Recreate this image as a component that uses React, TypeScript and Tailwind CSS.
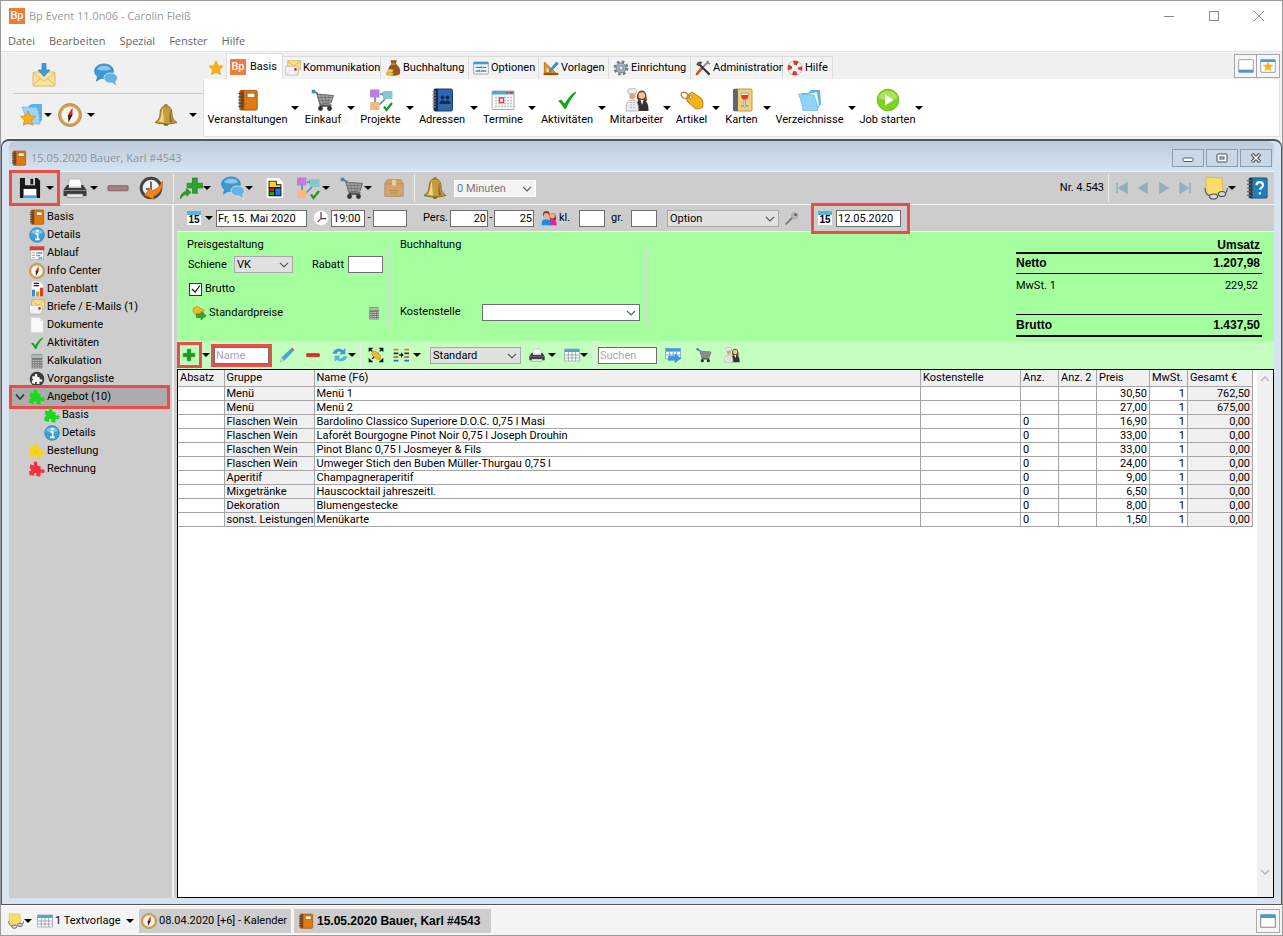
import type { ReactNode } from "react";

type P = { c?: string };

const Svg = ({ c = "size-6", children, box = "0 0 24 24" }: { c?: string; children: ReactNode; box?: string }) => (
  <svg viewBox={box} className={`${c} shrink-0`} aria-hidden="true">
    {children}
  </svg>
);

/* ---------- icons ---------- */
const Logo = ({ c = "size-4" }: P) => (
  <span className={`${c} flex shrink-0 items-center justify-center bg-[#ee7c3a] font-[Roboto] text-[11px] leading-none font-medium text-white`}>
    Bp
  </span>
);
const Notebook = ({ c }: P) => (
  <Svg c={c}>
    <rect x="3" y="1.500" width="19" height="21.500" rx="1.500" fill="#e07a10" stroke="#a8500a" />
    <rect x="4" y="2" width="4" height="20.500" fill="#8a4a18" />
    <path d="M1.500 5h5M1.500 8.500h5M1.500 12h5M1.500 15.500h5M1.500 19h5" stroke="#444" strokeWidth="1.300" />
    <rect x="11" y="4.500" width="8.500" height="5" fill="#fff" stroke="#9a4a0a" strokeWidth=".8" />
  </Svg>
);
const Cart = ({ c }: P) => (
  <Svg c={c}>
    <path d="M2 3.500l4 1.500 3.500 12h11" fill="none" stroke="#666" strokeWidth="1.600" />
    <path d="M6 6l16.500 1.500-2.500 7.500-11 1z" fill="#a2a2a2" stroke="#6a6a6a" />
    <path d="M10 7l2 8M14 7l1 8M18 7.500l-1 7.500M7 9.500h15M8 12.500h13" stroke="#6e6e6e" strokeWidth=".8" fill="none" />
    <path d="M8.500 18h11" stroke="#444" strokeWidth="1.500" />
    <circle cx="9.500" cy="20.500" r="2.400" fill="#333" />
    <circle cx="18.500" cy="20.500" r="2.400" fill="#333" />
    <circle cx="2.500" cy="3.500" r="2" fill="#2f8fc0" />
  </Svg>
);
const Projects = ({ c }: P) => (
  <Svg c={c}>
    <path d="M6 9v6M11 6h4M10 17l6-6" stroke="#3b8fd0" strokeWidth="1.600" fill="none" />
    <path d="M3.500 14h5L6 17zM13.500 3.500v5L16 6z" fill="#3b8fd0" />
    <rect x="1" y="1.500" width="9.500" height="8" rx="1" fill="#c07be0" />
    <rect x="14" y="3" width="9.500" height="8" rx="1" fill="#86c6cc" />
    <rect x="1" y="14" width="9.500" height="8" rx="1" fill="#fbb783" />
    <path d="M15 18.500l2.500 3.500L23 15" fill="none" stroke="#159a1f" strokeWidth="2.200" />
  </Svg>
);
const AddressBook = ({ c }: P) => (
  <Svg c={c}>
    <rect x="4" y="1" width="18.500" height="22" rx="1.500" fill="#2f66b0" stroke="#1c3c6c" />
    <rect x="4" y="1" width="4" height="22" fill="#1b2c48" />
    <path d="M2 4h4M2 7h4M2 10h4M2 13h4M2 16h4M2 19h4" stroke="#999" />
    <circle cx="12.500" cy="9.500" r="2" fill="#152c55" />
    <circle cx="17.500" cy="9.500" r="2" fill="#152c55" />
    <path d="M9.500 16c0-5 6-5 6 0zM14.500 16c0-5 6-5 6 0z" fill="#152c55" />
  </Svg>
);
const Calendar = ({ c }: P) => (
  <Svg c={c}>
    <rect x="1" y="3" width="22" height="18.500" rx="1" fill="#f8f8f8" stroke="#aaa" />
    <path d="M1 3h22v3.500H1z" fill="#4ba9dc" />
    <path d="M15 4h2v1.500h-2zM18.500 4h3v1.500h-3z" fill="#d33" />
    <path d="M4 9.500h17M4 12.500h17M4 15.500h17M4 18.500h17" stroke="#c4c4c4" strokeWidth="1.400" strokeDasharray="2 1" />
    <rect x="8.500" y="10" width="4" height="4.500" fill="#fff" stroke="#d33" strokeWidth="1.300" />
  </Svg>
);
const Check = ({ c }: P) => (
  <Svg c={c}>
    <path d="M3 13l3-1.500 3.500 4C13 10 16 6.500 20.500 3.500L21 5c-4 4.500-7.500 9.500-10 16H9.500C7.500 17.500 5.500 15 3 13z" fill="#12a81c" />
  </Svg>
);
const Staff = ({ c }: P) => (
  <Svg c={c}>
    <path d="M12 10c-1-9 9-10 9.500-2l.5 5h-9z" fill="#7b4520" />
    <circle cx="16.800" cy="7.500" r="3.300" fill="#f2c29a" />
    <path d="M11 23c0-8 1-11 6-11s6.500 4 6.500 11z" fill="#333" />
    <path d="M15.500 12l1.500 5 1.500-5z" fill="#fff" />
    <path d="M3.500 6C1 1 5 0 7 1c2-1.500 6 0 4 5z" fill="#eee" stroke="#999" strokeWidth=".7" />
    <circle cx="7.300" cy="8.300" r="3" fill="#dca57c" />
    <path d="M1 23c0-7 1-11 6.200-11s6.300 4 6.300 11z" fill="#ececec" stroke="#999" strokeWidth=".7" />
    <path d="M6 14v7M9 14v7" stroke="#888" strokeDasharray="1 1.500" />
  </Svg>
);
const Tag = ({ c }: P) => (
  <Svg c={c}>
    <path d="M7 8l5-4 9.500 6.500c1.500 2 1.700 5 1.200 8.500-2.500 2-5.500 2.500-8.200 1L7 13z" fill="#f5b21a" stroke="#c07c08" />
    <circle cx="10.500" cy="9" r="1.500" fill="#fff" stroke="#a87010" strokeWidth=".7" />
    <path d="M10 9C5 2 0 4 1.500 8c1.500 3 5 3 8 1" fill="none" stroke="#b08a40" strokeWidth="1.500" />
  </Svg>
);
const MenuCard = ({ c }: P) => (
  <Svg c={c}>
    <rect x="4" y="1" width="18" height="22" rx="1" fill="#f2d077" stroke="#b59a50" />
    <rect x="3" y="1" width="5" height="22" rx="1" fill="#5f6670" />
    <path d="M11 5h7.500c0 5-1 6.500-3 7v5.500h2.500v1.200h-6.500v-1.200h2.500V12c-2-.5-3-2-3-7z" fill="#e6eef2" stroke="#889" strokeWidth=".7" />
    <path d="M11.300 7h6.900c-.2 3-1 4.500-3.400 4.800-2.400-.3-3.300-1.800-3.500-4.800z" fill="#e03c2c" />
  </Svg>
);
const Folder = ({ c }: P) => (
  <Svg c={c}>
    <path d="M3 5h7l3-3h9l1 14-4 6z" fill="#5fb2e4" />
    <path d="M5 7l14-3 2 13-2 3z" fill="#e8f5fd" />
    <path d="M.5 6l15.500 1c2 5 3 9 4 15.500H5C4 16 3 12 .5 6z" fill="#8fd4f8" stroke="#68b5e4" strokeWidth=".7" />
  </Svg>
);
const Play = ({ c }: P) => (
  <Svg c={c}>
    <circle cx="12" cy="12" r="10.800" fill="#7ed321" stroke="#66b414" strokeWidth=".8" />
    <path d="M2.500 10a10 10 0 0119 0c-5 3-13 3-19 0z" fill="#a8e45e" />
    <path d="M9 6.500v11l8.500-5.500z" fill="#fff" />
  </Svg>
);
const Star = ({ c }: P) => (
  <Svg c={c}>
    <path d="M12 1.500l3.200 7 7.500.8-5.600 5.200 1.600 7.600L12 18.200l-6.700 3.900 1.600-7.600L1.300 9.300l7.500-.8z" fill="#fbb116" stroke="#d88c0a" strokeWidth=".9" />
  </Svg>
);
const Mail = ({ c }: P) => (
  <Svg c={c}>
    <rect x="4" y="1" width="19.500" height="14" rx="1" fill="#fbe08e" stroke="#c9a448" />
    <path d="M4 2l9.500 7L23 2" fill="none" stroke="#c9a448" />
    <rect x=".7" y="9.500" width="19" height="13" rx="1" fill="#f6f6f6" stroke="#aaa" />
    <path d="M1 22l8-8M19 22l-6-7" stroke="#ccc" />
    <rect x="14" y="12" width="3.500" height="4" fill="#dd2c1c" />
  </Svg>
);
const MoneyBag = ({ c }: P) => (
  <Svg c={c}>
    <path d="M9 1h8l-1.500 5c5 3 8 9 6 15-4 2.500-13 2.500-15.500 0C4.500 15 6.500 9 10.500 6z" fill="#96581e" stroke="#6a3a0e" />
    <path d="M9.500 6h6" stroke="#e5b45a" strokeWidth="1.500" />
    <ellipse cx="7" cy="20.500" rx="5.500" ry="2.500" fill="#f4c64c" stroke="#b98a18" strokeWidth=".8" />
    <ellipse cx="8" cy="16" rx="4.500" ry="2.200" fill="#f8d76a" stroke="#b98a18" strokeWidth=".8" />
  </Svg>
);
const Options = ({ c }: P) => (
  <Svg c={c}>
    <rect x="1" y="3" width="22" height="18" rx="1" fill="#f4f8f8" stroke="#7a8a90" />
    <path d="M1 3h22v3.500H1z" fill="#3f9dcc" />
    <path d="M4 11h8M15 11h5M4 16.500h5M12 16.500h8" stroke="#67828a" strokeWidth="2" />
    <path d="M12 9.500l2 3M9 15l2 3" stroke="#2c8cba" strokeWidth="1.800" />
  </Svg>
);
const Templates = ({ c }: P) => (
  <Svg c={c}>
    <path d="M2 3v18h19z" fill="#e8922c" stroke="#a85a0c" />
    <path d="M5.500 12v6h6z" fill="#efefef" />
    <path d="M1 21h22" stroke="#9a5510" strokeWidth="3.500" />
    <path d="M10 15L20 3l3 2.500-10.500 11L9 18z" fill="#3b9bd8" stroke="#1f6898" strokeWidth=".8" />
  </Svg>
);
const Gear = ({ c }: P) => (
  <Svg c={c}>
    <circle cx="12" cy="12" r="9.500" fill="none" stroke="#6b7c8e" strokeWidth="3.500" strokeDasharray="4 3.460" />
    <circle cx="12" cy="12" r="7.500" fill="#a7b4c2" stroke="#6b7c8e" strokeWidth="1.500" />
    <circle cx="12" cy="12" r="3.200" fill="#f0f0f0" stroke="#5a6a7a" strokeWidth="1.200" />
  </Svg>
);
const Tools = ({ c }: P) => (
  <Svg c={c}>
    <path d="M20 3L7 15" stroke="#8c8c8c" strokeWidth="2.600" />
    <path d="M10 12.500L3 21" stroke="#e0502a" strokeWidth="4" strokeLinecap="round" />
    <path d="M7 7l14 14" stroke="#333" strokeWidth="3.200" strokeLinecap="round" />
    <path d="M2 7c1-4 5-6 9-4L7.500 8.500 5 9.500z" fill="#555" />
    <path d="M17 1l1 4 4 2 1.500-3-2.500 1-1.500-1.500L21 1z" fill="#888" />
  </Svg>
);
const Lifebuoy = ({ c }: P) => (
  <Svg c={c}>
    <circle cx="12" cy="12" r="7.800" fill="none" stroke="#f6f6f6" strokeWidth="6" />
    <circle cx="12" cy="12" r="7.800" fill="none" stroke="#e2382c" strokeWidth="6" strokeDasharray="6.500 5.750" strokeDashoffset="3.200" />
    <circle cx="12" cy="12" r="10.800" fill="none" stroke="#a66" strokeWidth=".6" />
  </Svg>
);
const MailIn = ({ c }: P) => (
  <Svg c={c}>
    <rect x="1" y="9" width="22" height="14" rx="1" fill="#fbe3a0" stroke="#dbb968" />
    <path d="M1 10l11 8 11-8M1 22l8-7M23 22l-8-7" fill="none" stroke="#dbb968" />
    <path d="M10 .5h4V7h4l-6 6.500L6 7h4z" fill="#3c9ed8" stroke="#2b82b8" strokeWidth=".7" />
  </Svg>
);
const Chat = ({ c }: P) => (
  <Svg c={c}>
    <path d="M10 1c5.500 0 9.300 3 9.300 7s-4 7.500-9.300 7.500c-1 0-2 0-3-.3L2.500 18l1-4.500C1.700 12 .7 10.500.7 8c0-4 3.800-7 9.300-7z" fill="#3f97d2" stroke="#2f80bc" strokeWidth=".8" />
    <path d="M3 6c2-4.500 12-4.500 14 0-3 2-10 2-14 0z" fill="#8cc8ee" />
    <path d="M16.500 10c4 0 6.800 2 6.800 5 0 1.500-.6 2.700-1.700 3.600l1.200 5-4.300-3.600c-5 .6-8.500-1.800-8.500-5s2.500-5 6.500-5z" fill="#62b3e8" stroke="#e6f2fa" strokeWidth=".7" />
  </Svg>
);
const FolderStar = ({ c }: P) => (
  <Svg c={c}>
    <path d="M9 3l4-2h10v16l-3 4z" fill="#5fb2e4" />
    <path d="M3 4l15 .5c2 5 2.500 10 3 16.500H7C6 14 6 10 3 4z" fill="#9ad6f6" stroke="#68b5e4" strokeWidth=".7" />
    <path d="M9 8l2.200 4.800 5.300.6-4 3.600 1.200 5.300L9 19.600 4.300 22.300 5.500 17l-4-3.600 5.300-.6z" fill="#fbb116" stroke="#d88c0a" strokeWidth=".8" />
  </Svg>
);
const Compass = ({ c }: P) => (
  <Svg c={c}>
    <circle cx="12" cy="12" r="10" fill="#f8f6ee" stroke="#d2a450" strokeWidth="2.800" />
    <circle cx="12" cy="12" r="11.500" fill="none" stroke="#9a6c1c" strokeWidth=".6" />
    <path d="M14.500 4.500v7.500H10z" fill="#dd2222" />
    <path d="M10 12h4.500L10.500 19.500z" fill="#222" />
  </Svg>
);
const Bell = ({ c }: P) => (
  <Svg c={c}>
    <circle cx="12" cy="20.500" r="2.500" fill="#8a6420" />
    <circle cx="12" cy="2.500" r="1.800" fill="#b08a3a" />
    <path d="M12 3c5 0 5.800 4 6 8 .2 4 1.500 6 5 8.500-6 2-16 2-22 0C4.500 17 5.800 15 6 11c.2-4 1-8 6-8z" fill="#c79c3c" stroke="#7c5c1c" strokeWidth=".8" />
    <path d="M9 5c-2 3-1 9-4 13.500 2 .7 3 .8 5 1C10 15 8.500 9 9 5z" fill="#f0d58a" />
    <path d="M16 6c1 4 0 9 3 13l-3 .7c-1-4-.5-9 0-13.700z" fill="#8f6a22" />
  </Svg>
);
const Save = ({ c }: P) => (
  <Svg c={c}>
    <path d="M1 1h19l3 3v19H1z" fill="#181818" />
    <rect x="5" y="13" width="14" height="10" fill="#fff" />
    <rect x="5" y="20" width="14" height="3" fill="#3fa9dc" />
    <rect x="6.500" y="1" width="11" height="8" fill="#d0d0d0" />
    <rect x="12.500" y="2" width="3" height="6" fill="#181818" />
  </Svg>
);
const Printer = ({ c }: P) => (
  <Svg c={c}>
    <path d="M6.500 3h11l1.500 8H5z" fill="#fafafa" stroke="#aaa" strokeWidth=".7" />
    <path d="M4 9h2l-.5 3h13L18 9h2l3.500 5v6H.5v-6z" fill="#3a3a3a" />
    <path d="M1 14.500h22" stroke="#888" />
    <rect x="4" y="18" width="16" height="3.500" fill="#e6e6e6" stroke="#777" strokeWidth=".6" />
  </Svg>
);
const Minus = ({ c, fill = "#a08080", line = "#7c5f5f" }: P & { fill?: string; line?: string }) => (
  <Svg c={c}>
    <rect x="1" y="9.500" width="22" height="5.500" rx="1" fill={fill} stroke={line} />
  </Svg>
);
const ClockArrow = ({ c }: P) => (
  <Svg c={c}>
    <circle cx="12" cy="12" r="9.800" fill="#f4f4f4" stroke="#444" strokeWidth="3" />
    <path d="M12 5.500V13H7" fill="none" stroke="#444" strokeWidth="1.500" />
    <path d="M23.500 5c.5 8-3 13-9 15.500l.5 3L5.500 19l6-7.500.7 3.500C17 13.500 21 10.500 23.500 5z" fill="#f2831c" stroke="#c85c08" strokeWidth=".6" />
  </Svg>
);
const PlusArrow = ({ c }: P) => (
  <Svg c={c}>
    <path d="M13 1h5v5.500h5.500v5H18V17h-5v-5.500H7.500v-5H13z" fill="#2aa52a" stroke="#148014" strokeWidth=".7" />
    <path d="M.5 23c0-5 2.500-7.500 6-8V12l5 4-4.500 4v-2.300c-2.500.3-4.500 2-6.500 5.300z" fill="#22a422" stroke="#128012" strokeWidth=".6" />
  </Svg>
);
const ColorDoc = ({ c }: P) => (
  <Svg c={c}>
    <path d="M3 1h13l5 5v17H3z" fill="#fff" />
    <path d="M5 4h9v4h5v13H5z" fill="#111" />
    <path d="M6 5h7v6H6zM13 9h5v2h-5z" fill="#ffd800" />
    <rect x="6" y="12.500" width="5" height="3" fill="#e02020" />
    <rect x="6" y="16.500" width="5" height="3.500" fill="#22a822" />
    <rect x="12.500" y="12.500" width="5.500" height="7.500" fill="#1478e8" />
  </Svg>
);
const Box = ({ c }: P) => (
  <Svg c={c}>
    <path d="M4 2h16l3 5v15H1V7z" fill="#d2a36c" stroke="#b88a54" />
    <path d="M1 7h22" stroke="#b88a54" />
    <path d="M10 2h4l.5 7h-5z" fill="#ecd0a4" />
    <path d="M6 15h12M8 18h8" stroke="#b88a54" strokeWidth="1.400" />
  </Svg>
);
const Sticky = ({ c }: P) => (
  <Svg c={c}>
    <path d="M2 1l16 1 1 14-13 3-4-2z" fill="#f8dc6c" stroke="#d6b440" strokeWidth=".8" />
    <path d="M1 12c0 4 2 7 5 8M23.500 12c-.5 4-2 6-4 6" fill="none" stroke="#666" strokeWidth="1.300" />
    <ellipse cx="9.500" cy="20.500" rx="4" ry="2.500" fill="#d8d8d8" stroke="#555" strokeWidth="1.200" />
    <ellipse cx="18" cy="18" rx="3.600" ry="2.500" fill="#d8d8d8" stroke="#555" strokeWidth="1.200" />
  </Svg>
);
const HelpBook = ({ c }: P) => (
  <Svg c={c}>
    <rect x="4" y="1" width="19" height="22" rx="1" fill="#1f7fb8" stroke="#14567e" />
    <rect x="3" y="1" width="4" height="22" fill="#3a3a3a" />
    <path d="M1 4h4M1 8h4M1 12h4M1 16h4M1 20h4" stroke="#666" strokeWidth="1.300" />
    <path d="M11.500 9c0-4.500 7-4.500 7 0 0 2.500-3.200 2.500-3.200 5M15.200 16.500v2.500" fill="none" stroke="#fff" strokeWidth="2.400" />
  </Svg>
);
const Day15 = ({ c = "size-3.5" }: P) => (
  <span className={`${c} flex shrink-0 flex-col bg-white`}>
    <span className="h-1 w-full bg-[#57b3dd]" />
    <span className="flex flex-1 items-center justify-center font-[Liberation_Sans] text-[10px] leading-none font-bold">15</span>
  </span>
);
const Clock = ({ c }: P) => (
  <Svg c={c}>
    <circle cx="12" cy="12" r="11" fill="#fff" stroke="#ddd" />
    <path d="M12 3v10h8" fill="none" stroke="#444" strokeWidth="1.800" />
    <path d="M12 13l-5 5" stroke="#d22" strokeWidth="1.800" />
  </Svg>
);
const People = ({ c }: P) => (
  <Svg c={c}>
    <path d="M13 12c-1-9 8-10 9-3l1 6h-9z" fill="#8c3a24" />
    <circle cx="17" cy="8.500" r="3.800" fill="#f0b08c" />
    <path d="M11 23c0-8 2-9 6-9s6.500 2 6.500 9z" fill="#f01c9c" />
    <circle cx="8" cy="6.500" r="5" fill="#7a3c24" />
    <circle cx="8" cy="8.500" r="4" fill="#eab08c" />
    <path d="M1 23c0-8 2-9 7-9s7 2 7 9z" fill="#1c8cdc" />
  </Svg>
);
const Wrench = ({ c }: P) => (
  <Svg c={c}>
    <path d="M2 22L14 10" stroke="#777" strokeWidth="3" strokeLinecap="round" />
    <circle cx="16.500" cy="8" r="5.500" fill="#b8b8b8" stroke="#999" />
    <circle cx="18" cy="6.500" r="2.200" fill="#555" />
  </Svg>
);
const Info = ({ c }: P) => (
  <Svg c={c}>
    <circle cx="12" cy="12" r="11" fill="#3d9fd6" stroke="#2578a8" />
    <path d="M3 9a10 10 0 0118 0c-6 2-12 2-18 0z" fill="#86c6ea" />
    <circle cx="12.500" cy="6" r="1.800" fill="#fff" />
    <path d="M9.500 10.500H13V18M9 18.500h7" stroke="#fff" strokeWidth="2.400" fill="none" />
  </Svg>
);
const Schedule = ({ c }: P) => (
  <Svg c={c}>
    <rect x="2" y="3" width="20" height="19" fill="#fbfbfb" stroke="#aaa" />
    <path d="M1 2h22v6H1z" fill="#d8403c" />
    <path d="M4 12h5M4 15.500h5M4 19h5" stroke="#aaa" strokeWidth="1.500" />
    <path d="M11 12h9M11 16h6M14 19.500h6" stroke="#3f9dd8" strokeWidth="2" />
  </Svg>
);
const DataSheet = ({ c }: P) => (
  <Svg c={c}>
    <path d="M4 1h12l5 5v17H4z" fill="#fcfcfc" />
    <path d="M7 3.500h8M7 7h8" stroke="#222" strokeWidth="2" />
    <rect x="4.500" y="13" width="4.500" height="10" fill="#2f8fd8" />
    <rect x="10.500" y="16" width="4.500" height="7" fill="#f08c1c" />
    <rect x="16.500" y="10" width="4.500" height="13" fill="#dc3c2c" />
  </Svg>
);
const Page = ({ c }: P) => (
  <Svg c={c}>
    <path d="M3 1h13l5 5v17H3z" fill="#fafafa" stroke="#ddd" />
    <path d="M16 1v5h5z" fill="#ddd" />
  </Svg>
);
const Calculator = ({ c }: P) => (
  <Svg c={c}>
    <rect x="4" y="2" width="16" height="21" fill="#777" />
    <rect x="4" y="3" width="16" height="4.500" fill="#9fc49f" />
    <path d="M5.500 11h13M5.500 14.500h13M5.500 18h13M5.500 21h13" stroke="#f4f4f4" strokeWidth="1.200" strokeDasharray="2.500 1.300" />
  </Svg>
);
const puzzle =
  "M.5 15c3 .8 4-3 .5-4.300L2 5l5 1.200C9 6 5.500 3.500 7.500 1.500c2.200-1.800 6 0 4.800 2.700-.8 2 .2 2.800 2 3.200l3 .6.2 4c.5 2 2-.3 4 .3 3 1.200 2.500 5.500-.3 5.700-2 .2-3.200-2-3.700 0L17 23.500l-6-1c-1.500-1 1.500-2.500 0-4-1.500-1.200-4-.5-3.500 1.500.4 1.700.2 2.500-1.500 2.200L.5 21z";
const Puzzle = ({ c, fill = "#1bd81b" }: P & { fill?: string }) => (
  <Svg c={c}>
    <path d={puzzle} fill={fill} />
  </Svg>
);
const PuzzleDark = ({ c }: P) => (
  <Svg c={c}>
    <circle cx="12" cy="12" r="11" fill="#3c3c3c" />
    <path d={puzzle} fill="#fff" transform="translate(4 4) scale(.68)" />
  </Svg>
);
const TagArrow = ({ c }: P) => (
  <Svg c={c}>
    <path d="M3 5l6-3 11 6-2 8-8 1-7-6z" fill="#f5b82a" stroke="#c08a18" />
    <path d="M8 13h7V9.500l8 6.500-8 6.500V19H8z" fill="#35a62c" stroke="#1f7a1a" strokeWidth=".7" />
  </Svg>
);
const Plus = ({ c }: P) => (
  <Svg c={c}>
    <path d="M9 2h6v7h7v6h-7v7H9v-7H2V9h7z" fill="#159e15" stroke="#0b7a0b" strokeWidth=".7" />
  </Svg>
);
const Pencil = ({ c }: P) => (
  <Svg c={c}>
    <path d="M2 22l2-6L19 2l3 3L8 20z" fill="#4ba2dc" stroke="#2d78a8" strokeWidth=".7" />
    <path d="M2 22l2-6 4 4z" fill="#f0d0a0" />
    <path d="M18 3l2-2 3 3-2 2z" fill="#d85c5c" />
  </Svg>
);
const Refresh = ({ c }: P) => (
  <Svg c={c}>
    <path d="M1 10C2 3 12 0 17 5l3-3.500V11h-9l3-3c-3-2.500-6-1-7 2z" fill="#3a9ad8" />
    <path d="M23 14c-1 7-11 10-16 5l-3 3.500V13h9l-3 3c3 2.500 6 1 7-2z" fill="#5cb0e4" />
  </Svg>
);
const Expand = ({ c }: P) => (
  <Svg c={c}>
    <path d="M1 8V1h7L1 8zM23 8V1h-7zM1 16v7h7zM23 16v7h-7z" fill="#111" />
    <path d="M3 3l18 18M21 3L3 21" stroke="#111" strokeWidth="2" strokeDasharray="5 3" />
    <path d="M6 7l5-1 8 7-1 6-5-1-7-6z" fill="#f5b82a" stroke="#c08a18" />
  </Svg>
);
const Columns = ({ c }: P) => (
  <Svg c={c}>
    <path d="M1 4h7M17 4h7" stroke="#e8761c" strokeWidth="2.500" />
    <path d="M1 9.500h7M17 9.500h7" stroke="#333" strokeWidth="2.500" />
    <path d="M1 15h7M17 15h7" stroke="#d33" strokeWidth="2.500" />
    <path d="M1 20.500h7M17 20.500h7" stroke="#1c6cc8" strokeWidth="2.500" />
    <path d="M9 12h4" stroke="#111" strokeWidth="2" />
    <path d="M12 8v8l4-4z" fill="#111" />
  </Svg>
);
const Grid = ({ c }: P) => (
  <Svg c={c}>
    <rect x="1" y="3" width="22" height="18" fill="#fff" stroke="#8a9aa4" />
    <path d="M1 3h22v4.500H1z" fill="#4aa6dc" />
    <path d="M1 12h22M1 16.500h22M6.500 7v14M12 7v14M17.500 7v14" stroke="#8a9aa4" strokeWidth="1.200" />
  </Svg>
);
const GridArrow = ({ c }: P) => (
  <Svg c={c}>
    <rect x="1" y="2" width="22" height="16" fill="#fff" stroke="#5fa0cc" />
    <path d="M1 2h22v5H1z" fill="#3f9fdc" />
    <path d="M1 12h22M7 7v11M12 7v11M17.500 7v11" stroke="#5fa0cc" strokeWidth="1.300" />
    <path d="M5 14h10v-3.500l8.500 6.500-8.500 6.500V20H5z" fill="#3a9ae0" stroke="#2472ac" strokeWidth=".6" />
  </Svg>
);
const Pane = ({ c, star }: P & { star?: boolean }) => (
  <Svg c={c}>
    <rect x="1" y="2.500" width="22" height="19" rx="1" fill="#fff" stroke="#999" strokeWidth="1.400" />
    {star ? (
      <>
        <path d="M1 2.500h22V6H1z" fill="#3aa2d8" />
        <path d="M12 6l2 4.500 5 .5-3.700 3.300 1 4.700-4.300-2.500L7.700 19l1-4.700L5 11l5-.5z" fill="#fbb116" stroke="#fbb116" />
      </>
    ) : (
      <path d="M1 17.500h22v4H1z" fill="#3aa2d8" />
    )}
  </Svg>
);
const WindowIcon = ({ c }: P) => (
  <Svg c={c}>
    <rect x="1" y="2.500" width="22" height="19" rx="1" fill="#fff" stroke="#888" strokeWidth="1.600" />
    <path d="M1 2.500h22v5H1z" fill="#3aa2d8" />
  </Svg>
);

/* ---------- small controls ---------- */
const Caret = () => (
  <Svg c="h-1 w-2" box="0 0 8 4">
    <path d="M0 0h8L4 4z" fill="#000" />
  </Svg>
);

function Tool({ label, w, children, menu }: { label: string; w: string; children: ReactNode; menu?: boolean }) {
  return (
    <button type="button" aria-label={label} className={`${w} relative flex h-6 shrink-0 items-center justify-start`}>
      {children}
      {menu && (
        <span className="ml-auto">
          <Caret />
        </span>
      )}
    </button>
  );
}

const Sep = ({ c = "mx-2" }: P) => <span className={`${c} h-7 w-px shrink-0 bg-[#ececec]`} />;

function Field({ label, w, value, placeholder, right }: { label: string; w: string; value?: string; placeholder?: string; right?: boolean }) {
  return (
    <input
      aria-label={label}
      defaultValue={value}
      placeholder={placeholder}
      className={`${w} ${right ? "text-right" : ""} h-[17px] shrink-0 border border-[#6e6e6e] bg-white px-px leading-none outline-none placeholder:text-[#a9a3b5]`}
    />
  );
}

function Select({ label, w, value, tone = "border-[#a9a9a9] bg-[#e1e1e1]" }: { label: string; w: string; value: string; tone?: string }) {
  return (
    <span className={`${w} relative flex h-[17px] shrink-0`}>
      <select aria-label={label} className={`${tone} w-full appearance-none border pl-0.5 leading-none outline-none`}>
        <option>{value}</option>
      </select>
      <Svg c="pointer-events-none absolute top-1.5 right-1 h-1.5 w-2.5" box="0 0 10 6">
        <path d="M1 .8l4 4 4-4" fill="none" stroke="#555" strokeWidth="1.200" />
      </Svg>
    </span>
  );
}

const Mark = ({ c = "-inset-1" }: P) => <span className={`pointer-events-none absolute border-3 border-[#e84d47] ${c}`} />;

/* ---------- data ---------- */
const tabs = [
  { label: "Kommunikation", icon: <Mail c="size-4" />, w: "w-[98px]" },
  { label: "Buchhaltung", icon: <MoneyBag c="size-4" />, w: "w-[88px] pl-1" },
  { label: "Optionen", icon: <Options c="size-4" />, w: "w-[70px] pl-1" },
  { label: "Vorlagen", icon: <Templates c="size-4" />, w: "w-[70px] pl-1" },
  { label: "Einrichtung", icon: <Gear c="size-4" />, w: "w-[82px] pl-1" },
  { label: "Administration", icon: <Tools c="size-4" />, w: "w-[92px] pl-1" },
  { label: "Hilfe", icon: <Lifebuoy c="size-4" />, w: "w-[50px] pl-1" },
];

const ribbon = [
  { label: "Veranstaltungen", icon: <Notebook c="size-[22px]" />, w: "w-[87px]" },
  { label: "Einkauf", icon: <Cart />, w: "w-12" },
  { label: "Projekte", icon: <Projects />, w: "w-[51px]" },
  { label: "Adressen", icon: <AddressBook />, w: "w-14" },
  { label: "Termine", icon: <Calendar />, w: "w-[50px]" },
  { label: "Aktivitäten", icon: <Check />, w: "w-[62px]" },
  { label: "Mitarbeiter", icon: <Staff />, w: "w-[57px] pl-1" },
  { label: "Artikel", icon: <Tag />, w: "w-[41px]" },
  { label: "Karten", icon: <MenuCard />, w: "w-[43px]" },
  { label: "Verzeichnisse", icon: <Folder />, w: "w-[77px]" },
  { label: "Job starten", icon: <Play />, w: "w-[59px] pl-1" },
];

const tree = [
  { label: "Basis", icon: <Notebook c="size-4" /> },
  { label: "Details", icon: <Info c="size-4" /> },
  { label: "Ablauf", icon: <Schedule c="size-4" /> },
  { label: "Info Center", icon: <Compass c="size-4" /> },
  { label: "Datenblatt", icon: <DataSheet c="size-4" /> },
  { label: "Briefe / E-Mails (1)", icon: <Mail c="size-4" /> },
  { label: "Dokumente", icon: <Page c="size-4" /> },
  { label: "Aktivitäten", icon: <Check c="size-4" /> },
  { label: "Kalkulation", icon: <Calculator c="size-4" /> },
  { label: "Vorgangsliste", icon: <PuzzleDark c="size-4" /> },
  { label: "Angebot (10)", icon: <Puzzle c="size-4" />, active: true },
  { label: "Basis", icon: <Puzzle c="size-4" />, child: true },
  { label: "Details", icon: <Info c="size-4" />, child: true },
  { label: "Bestellung", icon: <Puzzle c="size-4" fill="#ffd21a" /> },
  { label: "Rechnung", icon: <Puzzle c="size-4" fill="#f5333f" /> },
];

const rows = [
  ["", "Menü", "Menü 1", "", "", "", "30,50", "1", "762,50"],
  ["", "Menü", "Menü 2", "", "", "", "27,00", "1", "675,00"],
  ["", "Flaschen Wein", "Bardolino Classico Superiore D.O.C. 0,75 l Masi", "", "0", "", "16,90", "1", "0,00"],
  ["", "Flaschen Wein", "Laforêt Bourgogne Pinot Noir 0,75 l Joseph Drouhin", "", "0", "", "33,00", "1", "0,00"],
  ["", "Flaschen Wein", "Pinot Blanc 0,75 l Josmeyer & Fils", "", "0", "", "33,00", "1", "0,00"],
  ["", "Flaschen Wein", "Umweger Stich den Buben Müller-Thurgau 0,75 l", "", "0", "", "24,00", "1", "0,00"],
  ["", "Aperitif", "Champagneraperitif", "", "0", "", "9,00", "1", "0,00"],
  ["", "Mixgetränke", "Hauscocktail jahreszeitl.", "", "0", "", "6,50", "1", "0,00"],
  ["", "Dekoration", "Blumengestecke", "", "0", "", "8,00", "1", "0,00"],
  ["", "sonst. Leistungen", "Menükarte", "", "0", "", "1,50", "1", "0,00"],
];
const heads = ["Absatz", "Gruppe", "Name (F6)", "Kostenstelle", "Anz.", "Anz. 2", "Preis", "MwSt.", "Gesamt €"];

/* ---------- sections ---------- */
function TitleBar() {
  return (
    <header className="border-b border-[#e3e3e3] bg-white font-[Open_Sans]">
      <div className="flex h-[29px] items-center pl-2 text-[#999]">
        <Logo />
        <span className="pl-1">Bp Event 11.0n06 - Carolin Fleiß</span>
        <div className="ml-auto flex items-center">
          <button type="button" aria-label="Minimieren" className="flex w-[45px] justify-center">
            <Svg c="size-3" box="0 0 12 12"><path d="M1 6.500h10" stroke="#888" /></Svg>
          </button>
          <button type="button" aria-label="Maximieren" className="flex w-[45px] justify-center">
            <Svg c="size-3" box="0 0 12 12"><rect x="1.500" y="1.500" width="9" height="9" fill="none" stroke="#888" /></Svg>
          </button>
          <button type="button" aria-label="Schließen" className="flex w-[46px] justify-center">
            <Svg c="size-3" box="0 0 12 12"><path d="M1 1l10 10M11 1L1 11" stroke="#888" /></Svg>
          </button>
        </div>
      </div>
      <nav className="flex h-[21px] items-center gap-3.5 pl-[7px] text-[#666]">
        {["Datei", "Bearbeiten", "Spezial", "Fenster", "Hilfe"].map((m) => (
          <button key={m} type="button">{m}</button>
        ))}
      </nav>
    </header>
  );
}

function Ribbon() {
  return (
    <div className="mt-px flex bg-[#f0f0f0] pr-0.5">
      <div className="flex w-[202px] flex-col pt-2 pl-3">
        <div className="flex h-[33px] items-center border-b border-[#ccc] pb-1 pl-[19px]">
          <Tool label="Posteingang" w="w-[62px]"><MailIn /></Tool>
          <Tool label="Chat" w="w-8"><Chat /></Tool>
        </div>
        <div className="flex h-[42px] items-center pl-1.5">
          <Tool label="Favoriten" w="w-[33px]" menu><FolderStar /></Tool>
          <span className="w-1.5" />
          <Tool label="Kalender" w="w-[37px]" menu><Compass /></Tool>
          <span className="w-[59px]" />
          <Tool label="Wecker" w="w-[43px]" menu><Bell /></Tool>
        </div>
      </div>
      <div className="min-w-0 flex-1">
        <div className="flex h-[26px] items-end">
          <div className="flex h-[23px] w-[23px] items-center justify-end pr-0.5"><Star c="size-4" /></div>
          <button type="button" className="flex h-[26px] w-[57px] items-center gap-1 border border-b-0 border-[#ddd] bg-white pl-[3px]">
            <Logo />Basis
          </button>
          {tabs.map((t) => (
            <button key={t.label} type="button" className={`${t.w} flex h-[23px] items-center gap-0.5 border-t border-r border-[#dcdcdc] bg-[#f3f3f3] pl-0.5 whitespace-nowrap`}>
              {t.icon}{t.label}
            </button>
          ))}
          <div className="ml-auto flex self-start pt-px">
            <button type="button" aria-label="Leiste" className="flex h-6 w-[23px] items-center justify-center border border-[#a5a5ad] bg-[#f6f6f6]"><Pane c="size-4" /></button>
            <button type="button" aria-label="Favoritenleiste" className="flex h-6 w-[23px] items-center justify-center border border-l-0 border-[#a5a5ad] bg-[#f6f6f6]"><Pane c="size-4" star /></button>
          </div>
        </div>
        <div className="flex h-[58px] border border-t-0 border-[#e2e2e2] bg-white pt-[9px]">
          {ribbon.map((r) => (
            <div key={r.label} className="flex">
              <button type="button" className={`${r.w} flex flex-col items-center whitespace-nowrap`}>
                <span className="flex h-6 items-center">{r.icon}</span>
                <span className="leading-4">{r.label}</span>
              </button>
              <button type="button" aria-label={`${r.label} Menü`} className="mt-3.5 h-3"><Caret /></button>
            </div>
          ))}
        </div>
      </div>
    </div>
  );
}

function WindowTitle() {
  const btn = "flex h-[18px] w-8 items-center justify-center border border-[#8d9bb0] bg-[#c9d8e8]";
  return (
    <div className="flex h-[30px] items-center rounded-t-md bg-linear-to-b from-[#bccbdb] to-[#d6e3f1] pt-1 pr-0.5 pl-0.5 font-[Open_Sans] text-[#8b939c]">
      <Notebook c="size-4" />
      <span className="pl-1">15.05.2020 Bauer, Karl #4543</span>
      <div className="ml-auto flex gap-0.5">
        <button type="button" aria-label="Minimieren" className={btn}>
          <Svg c="h-2.5 w-3" box="0 0 12 10"><rect x="1" y="5" width="10" height="3.500" rx="1" fill="#fff" stroke="#555d6c" /></Svg>
        </button>
        <button type="button" aria-label="Wiederherstellen" className={btn}>
          <Svg c="h-2.5 w-3" box="0 0 12 10"><rect x="1" y="1" width="10" height="8" rx="1" fill="#fff" stroke="#444b5a" /><rect x="4" y="4" width="4" height="2" fill="#fff" stroke="#444b5a" /></Svg>
        </button>
        <button type="button" aria-label="Schließen" className={btn}>
          <Svg c="h-2.5 w-3" box="0 0 12 10"><path d="M2 1l8 8M10 1L2 9" stroke="#444b5a" strokeWidth="3.600" /><path d="M2.500 1.500l7 7M9.500 1.500l-7 7" stroke="#fff" strokeWidth="1.600" /></Svg>
        </button>
      </div>
    </div>
  );
}

function EventToolbar() {
  return (
    <div className="flex h-[34px] shrink-0 items-center border-t border-b border-[#f2f2f2] pr-1.5 pl-2.5">
      <Tool label="Speichern" w="w-[35px]" menu>
        <Save c="size-[22px]" />
        <Mark c="-top-1.5 -right-1.5 -bottom-1.5 -left-2.5" />
      </Tool>
      <span className="w-[9px]" />
      <Tool label="Drucken" w="w-[35px]" menu><Printer /></Tool>
      <span className="w-[9px]" />
      <Tool label="Löschen" w="w-8"><Minus c="size-[22px]" /></Tool>
      <Tool label="Wiedervorlage" w="w-6"><ClockArrow /></Tool>
      <Sep c="mr-1.5 ml-2.5" />
      <Tool label="Neu" w="w-[31px]" menu><PlusArrow c="size-[23px]" /></Tool>
      <span className="w-2.5" />
      <Tool label="Nachricht" w="w-8" menu><Chat /></Tool>
      <span className="w-[11px]" />
      <Tool label="Bericht" w="w-8"><ColorDoc c="size-[22px]" /></Tool>
      <Tool label="Projekte" w="w-[34px]" menu><Projects /></Tool>
      <span className="w-2.5" />
      <Tool label="Einkauf" w="w-8" menu><Cart /></Tool>
      <span className="w-3" />
      <Tool label="Paket" w="w-[22px]"><Box c="size-5" /></Tool>
      <Sep c="mr-2 ml-2" />
      <Tool label="Erinnerung" w="w-[31px]"><Bell /></Tool>
      <Select label="Erinnerungszeit" w="w-[82px]" value="0 Minuten" tone="border-white bg-[#f3f3f3] text-[#777]" />
      <span className="ml-auto pr-1">Nr. 4.543</span>
      <Sep c="mr-1.5" />
      {["M2 2v10M12 2v10L4 7z", "M11 2v10L3 7z", "M3 2v10l8-5z", "M12 2v10M2 2v10l8-5z"].map((d, i) => (
        <Tool key={d} label={["Erster", "Zurück", "Weiter", "Letzter"][i]} w="w-[21px]">
          <Svg c="size-3.5" box="0 0 14 14"><path d={d} fill="#8fb0bf" stroke="#8fb0bf" strokeWidth="1.500" /></Svg>
        </Tool>
      ))}
      <span className="w-[5px]" />
      <Tool label="Notizen" w="w-8" menu><Sticky /></Tool>
      <span className="w-2.5" />
      <Tool label="Hilfe" w="w-[22px]"><HelpBook c="size-[22px]" /></Tool>
    </div>
  );
}

function Sidebar() {
  return (
    <nav className="w-[165px] shrink-0 border-r-2 border-[#f2f2f2] pt-[3px]">
      {tree.map((t, i) => (
        <div key={i} className="relative flex h-[18px] items-center">
          <div className={`flex h-full flex-1 items-center ${t.active ? "mr-0.5 bg-[#acacac]" : ""}`}>
            <span className="flex w-5 justify-center pl-0.5">
              {t.active && <Svg c="size-2.5" box="0 0 10 10"><path d="M1 2.500l4 4.500 4-4.500" fill="none" stroke="#333" strokeWidth="1.600" /></Svg>}
            </span>
            {t.child && <span className="w-[15px]" />}
            <a href="#" className="flex items-center gap-0.5">{t.icon}{t.label}</a>
          </div>
          {t.active && <Mark c="-inset-y-[3px] left-0 right-0.5" />}
        </div>
      ))}
    </nav>
  );
}

function DateRow() {
  return (
    <div className="flex h-[26px] shrink-0 items-center pl-2.5">
      <Tool label="Datum wählen" w="w-[26px]" menu><Day15 /></Tool>
      <span className="w-[3px]" />
      <Field label="Datum" w="w-[91px]" value="Fr, 15. Mai 2020" />
      <span className="w-1.5" />
      <Clock c="size-4" />
      <span className="w-0.5" />
      <Field label="Beginn" w="w-[34px]" value="19:00" />
      <span className="w-2 text-center">-</span>
      <Field label="Ende" w="w-[34px]" />
      <span className="w-[43px] pr-0.5 text-right">Pers.</span>
      <Field label="Personen von" w="w-[38px]" value="20" right />
      <span className="w-1.5 text-center">-</span>
      <Field label="Personen bis" w="w-10" value="25" right />
      <span className="w-[7px]" />
      <People c="size-4" />
      <label htmlFor="kl" className="w-[22px] pl-0.5">kl.</label>
      <input id="kl" className="h-[17px] w-[26px] border border-[#6e6e6e] bg-white" />
      <label htmlFor="gr" className="w-[26px] pl-1.5">gr.</label>
      <input id="gr" className="h-[17px] w-[26px] border border-[#6e6e6e] bg-white" />
      <span className="w-2.5" />
      <Select label="Status" w="w-[112px]" value="Option" />
      <span className="w-1.5" />
      <Tool label="Status einstellen" w="w-[33px]"><Wrench c="size-3.5" /></Tool>
      <div className="relative flex items-center gap-1">
        <Day15 />
        <Field label="Optionsdatum" w="w-[65px]" value="12.05.2020" />
        <Mark c="-inset-y-[7px] -left-[7px] -right-[9px]" />
      </div>
    </div>
  );
}

function PricePanel() {
  return (
    <div className="flex h-[110px] shrink-0 border-t border-[#f2f2f2] bg-[#a6ff9f] pt-1.5 pl-1">
      <fieldset className="h-[90px] w-[208px] border border-[#d4dcd4] px-[5px]">
        <legend className="px-0 leading-3.5">Preisgestaltung</legend>
        <div className="flex h-[25px] items-center">
          <label className="flex items-center"><span className="w-[47px] pl-px">Schiene</span><Select label="Schiene" w="w-[59px]" value="VK" /></label>
          <label className="ml-auto flex items-center gap-1"><span>Rabatt</span><Field label="Rabatt" w="w-[35px]" /></label>
        </div>
        <label className="flex h-6 items-center gap-[3px] pl-0.5">
          <input type="checkbox" defaultChecked className="peer sr-only" />
          <span className="flex size-[13px] items-center justify-center border border-[#333] bg-white">
            <Svg c="size-2.5" box="0 0 10 10"><path d="M1 5l3 3 5-6.500" fill="none" stroke="#111" strokeWidth="1.200" /></Svg>
          </span>
          Brutto
        </label>
        <div className="flex h-6 items-center">
          <button type="button" className="flex items-center gap-0.5 pl-1"><TagArrow c="size-4" />Standardpreise</button>
          <button type="button" aria-label="Kalkulation" className="mr-0.5 ml-auto"><Calculator c="size-3.5" /></button>
        </div>
      </fieldset>
      <fieldset className="ml-1 flex h-[90px] w-[252px] flex-col border border-[#d4dcd4] px-1.5 pb-1">
        <legend className="px-0 leading-3.5">Buchhaltung</legend>
        <label className="mt-[49px] flex h-6 items-center"><span className="w-[82px]">Kostenstelle</span><Select label="Kostenstelle" w="w-[158px]" value="" tone="border-[#6e6e6e] bg-white" /></label>
      </fieldset>
      <table className="mr-3 ml-auto h-[98px] w-[246px] self-start text-left">
        <thead>
          <tr className="h-[15px] border-b-2 border-black text-right font-[Liberation_Sans] text-xs leading-3">
            <td />
            <th className="pr-0.5">Umsatz</th>
          </tr>
        </thead>
        <tbody>
          <tr className="h-5 border-b border-black font-[Liberation_Sans] text-xs leading-3 font-bold">
            <th>Netto</th>
            <td className="pr-0.5 text-right">1.207,98</td>
          </tr>
          <tr className="h-[41px] border-b border-black align-top">
            <td className="pt-1">MwSt. 1</td>
            <td className="pt-1 pr-1 text-right">229,52</td>
          </tr>
          <tr className="h-[22px] border-b-2 border-black font-[Liberation_Sans] text-xs leading-3 font-bold">
            <th>Brutto</th>
            <td className="pr-0.5 text-right">1.437,50</td>
          </tr>
        </tbody>
      </table>
    </div>
  );
}

function TableToolbar() {
  return (
    <div className="flex h-7 shrink-0 items-center bg-[#c4ffbf] pl-[5px]">
      <Tool label="Hinzufügen" w="w-7" menu>
        <Plus c="size-3.5" />
        <Mark c="-left-[5px] right-2 -inset-y-px" />
      </Tool>
      <span className="w-1" />
      <div className="relative flex">
        <Field label="Name" w="w-[55px]" placeholder="Name" />
        <Mark c="-inset-[3px]" />
      </div>
      <span className="w-2.5" />
      <Tool label="Bearbeiten" w="w-[27px]"><Pencil c="size-4" /></Tool>
      <Tool label="Entfernen" w="w-[26px]"><Minus c="size-3.5" fill="#e02a2a" line="#b81c1c" /></Tool>
      <Tool label="Aktualisieren" w="w-[22px]" menu><Refresh c="size-4" /></Tool>
      <Sep c="mr-[7px] ml-1.5" />
      <Tool label="Anpassen" w="w-[25px]"><Expand c="size-4" /></Tool>
      <Tool label="Spalten" w="w-7" menu><Columns c="size-4" /></Tool>
      <Sep c="mx-1" />
      <Select label="Ansicht" w="w-[91px]" value="Standard" />
      <span className="w-2" />
      <Tool label="Liste drucken" w="w-[27px]" menu><Printer c="size-4" /></Tool>
      <span className="w-2" />
      <Tool label="Tabelle" w="w-6" menu><Grid c="size-4" /></Tool>
      <Sep c="mr-[3px] ml-1.5" />
      <Field label="Suchen" w="w-[59px]" placeholder="Suchen" />
      <span className="w-2" />
      <Tool label="Exportieren" w="w-4"><GridArrow c="size-4" /></Tool>
      <Sep c="mr-2 ml-1.5" />
      <Tool label="Warenkorb" w="w-7"><Cart c="size-4" /></Tool>
      <Tool label="Personal" w="w-4"><Staff c="size-4" /></Tool>
    </div>
  );
}

function Positions() {
  return (
    <div className="flex flex-1 border border-black bg-white">
      <div className="min-w-0 flex-1 pr-1">
        <table className="w-full table-fixed border-collapse text-left">
          <colgroup>
            <col className="w-[46px]" />
            <col className="w-[90px]" />
            <col />
            <col className="w-[100px]" />
            <col className="w-[38px]" />
            <col className="w-[38px]" />
            <col className="w-[53px]" />
            <col className="w-[38px]" />
            <col className="w-[65px]" />
          </colgroup>
          <thead>
            <tr className="h-4 bg-[#f0f0f0]">
              {heads.map((h) => (
                <th key={h} className="border-r border-b border-[#a5a5a5] p-0 pl-0.5 leading-4 font-normal whitespace-nowrap">{h}</th>
              ))}
            </tr>
          </thead>
          <tbody>
            {rows.map((r, i) => (
              <tr key={i} className="h-3.5">
                {r.map((v, j) => (
                  <td
                    key={j}
                    className={`${j >= 6 ? "pr-0.5 text-right" : "pl-0.5"} ${j === 1 || j === 8 ? "bg-[#f0f0f0]" : ""} h-3.5 border-r border-b border-[#a5a5a5] py-0 leading-[13px] whitespace-nowrap`}
                  >
                    {v}
                  </td>
                ))}
              </tr>
            ))}
          </tbody>
        </table>
      </div>
      <div className="flex w-4 flex-col items-center justify-between bg-[#f0f0f0] py-1.5">
        <Svg c="h-1.5 w-2.5" box="0 0 10 6"><path d="M1 5l4-4 4 4" fill="none" stroke="#b8b8b8" strokeWidth="1.500" /></Svg>
        <span className="pb-4"><Svg c="h-1.5 w-2.5" box="0 0 10 6"><path d="M1 1l4 4 4-4" fill="none" stroke="#b8b8b8" strokeWidth="1.500" /></Svg></span>
      </div>
    </div>
  );
}

function TaskBar() {
  return (
    <footer className="flex h-[30px] shrink-0 items-center border-t border-white bg-[#f4f4f4] pr-0.5 pl-[7px]">
      <Tool label="Notizen" w="w-6" menu><Sticky c="size-4" /></Tool>
      <button type="button" className="flex w-[98px] items-center gap-0.5 pl-[5px] whitespace-nowrap">
        <Grid c="size-4" />1 Textvorlage
        <span className="-mr-1 ml-auto"><Caret /></span>
      </button>
      <span className="w-[9px]" />
      <button type="button" className="flex h-6 w-[152px] items-center gap-0.5 bg-[#cdcdcd] pl-0.5 whitespace-nowrap">
        <Compass c="size-4" />08.04.2020 [+6] - Kalender
      </button>
      <button type="button" className="ml-[3px] flex h-6 w-[197px] items-center gap-[3px] bg-[#cdcdcd] pl-1 font-[Liberation_Sans] text-xs font-bold whitespace-nowrap">
        <Notebook c="size-4" />15.05.2020 Bauer, Karl #4543
      </button>
      <button type="button" aria-label="Fenster" className="ml-auto flex h-6 w-6 items-center justify-center border border-[#aaa] bg-[#f6f6f6]"><WindowIcon c="size-4" /></button>
    </footer>
  );
}

export default function App() {
  return (
    <div className="flex min-h-screen flex-col border border-[#9c9c9c] bg-[#f4f4f4] font-[Roboto,'Liberation_Sans',sans-serif] text-[11px] leading-4 text-black">
      <TitleBar />
      <Ribbon />
      <main className="mt-0.5 flex flex-1 flex-col rounded-t-lg border-t-2 border-r border-b border-l border-[#555] bg-[#d6e3f1] px-[7px] pb-1.5">
        <WindowTitle />
        <div className="flex flex-1 flex-col bg-[#cdcdcd]">
          <EventToolbar />
          <div className="flex flex-1">
            <Sidebar />
            <div className="ml-[3px] flex min-w-0 flex-1 flex-col">
              <DateRow />
              <PricePanel />
              <TableToolbar />
              <Positions />
            </div>
          </div>
        </div>
      </main>
      <TaskBar />
    </div>
  );
}
